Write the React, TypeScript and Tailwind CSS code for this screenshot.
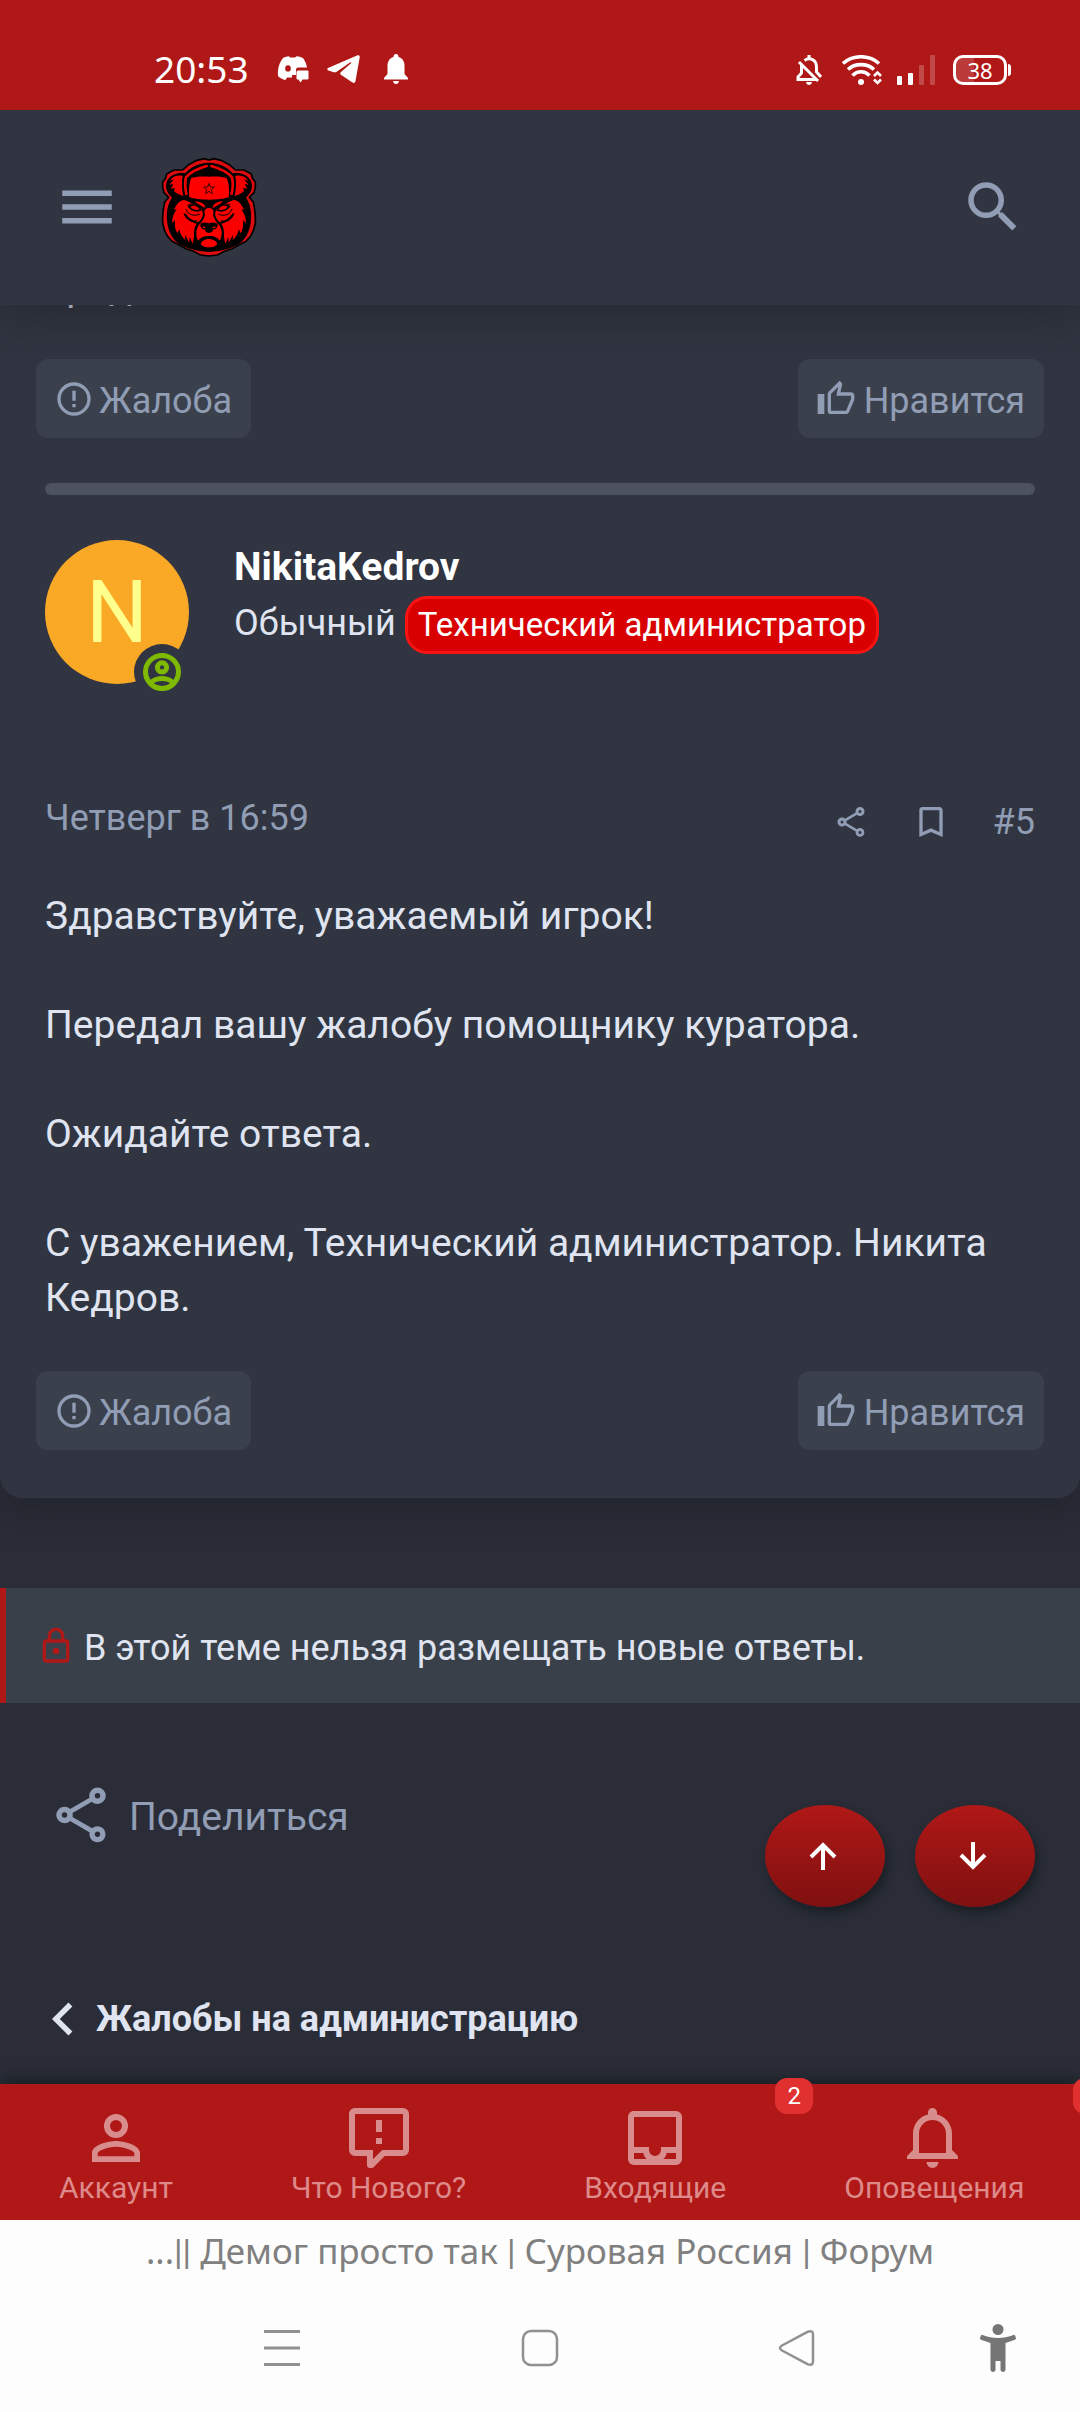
import React from "react";

const PATHS = {
  menu: "M3,6H21V8H3V6M3,11H21V13H3V11M3,16H21V18H3V16Z",
  search:
    "M9.5,3A6.5,6.5 0 0,1 16,9.5C16,11.11 15.41,12.59 14.44,13.73L14.71,14H15.5L20.5,19L19,20.5L14,15.5V14.71L13.73,14.44C12.59,15.41 11.11,16 9.5,16A6.5,6.5 0 0,1 3,9.5A6.5,6.5 0 0,1 9.5,3M9.5,5C7,5 5,7 5,9.5C5,12 7,14 9.5,14C12,14 14,12 14,9.5C14,7 12,5 9.5,5Z",
  share:
    "M18,16.08C17.24,16.08 16.56,16.38 16.04,16.85L8.91,12.7C8.96,12.47 9,12.24 9,12C9,11.76 8.96,11.53 8.91,11.3L15.96,7.19C16.5,7.69 17.21,8 18,8A3,3 0 0,0 21,5A3,3 0 0,0 18,2A3,3 0 0,0 15,5C15,5.24 15.04,5.47 15.09,5.7L8.04,9.81C7.5,9.31 6.79,9 6,9A3,3 0 0,0 3,12A3,3 0 0,0 6,15C6.79,15 7.5,14.69 8.04,14.19L15.16,18.34C15.11,18.55 15.08,18.77 15.08,19C15.08,20.61 16.39,21.91 18,21.91C19.61,21.91 20.92,20.61 20.92,19C20.92,17.39 19.61,16.08 18,16.08M18,4A1,1 0 0,1 19,5A1,1 0 0,1 18,6A1,1 0 0,1 17,5A1,1 0 0,1 18,4M6,13A1,1 0 0,1 5,12A1,1 0 0,1 6,11A1,1 0 0,1 7,12A1,1 0 0,1 6,13M18,20C17.45,20 17,19.55 17,19C17,18.45 17.45,18 18,18C18.55,18 19,18.45 19,19C19,19.55 18.55,20 18,20Z",
  alert:
    "M11,15H13V17H11V15M11,7H13V13H11V7M12,2C6.47,2 2,6.5 2,12A10,10 0 0,0 12,22A10,10 0 0,0 22,12A10,10 0 0,0 12,2M12,20A8,8 0 0,1 4,12A8,8 0 0,1 12,4A8,8 0 0,1 20,12A8,8 0 0,1 12,20Z",
  like: "M5,9V21H1V9H5M9,21A2,2 0 0,1 7,19V9C7,8.45 7.22,7.95 7.59,7.59L14.17,1L15.23,2.06C15.5,2.33 15.67,2.7 15.67,3.11L15.64,3.43L14.69,8H21C22.11,8 23,8.9 23,10V12C23,12.26 22.95,12.5 22.86,12.73L19.84,19.78C19.54,20.5 18.83,21 18,21H9M9,19H18.03L21,12V10H12.21L13.34,4.68L9,9.03V19Z",
  bookmark:
    "M17,18L12,15.82L7,18V5H17M17,3H7A2,2 0 0,0 5,5V21L12,18L19,21V5C19,3.89 18.1,3 17,3Z",
  chevron: "M15.41,16.58L10.83,12L15.41,7.41L14,6L8,12L14,18L15.41,16.58Z",
  lock: "M12,17C10.89,17 10,16.1 10,15C10,13.89 10.89,13 12,13A2,2 0 0,1 14,15A2,2 0 0,1 12,17M18,20V10H6V20H18M18,8A2,2 0 0,1 20,10V20A2,2 0 0,1 18,22H6C4.89,22 4,21.1 4,20V10C4,8.89 4.89,8 6,8H7V6A5,5 0 0,1 12,1A5,5 0 0,1 17,6V8H18M12,3A3,3 0 0,0 9,6V8H15V6A3,3 0 0,0 12,3Z",
  account:
    "M12,4A4,4 0 0,1 16,8A4,4 0 0,1 12,12A4,4 0 0,1 8,8A4,4 0 0,1 12,4M12,6A2,2 0 0,0 10,8A2,2 0 0,0 12,10A2,2 0 0,0 14,8A2,2 0 0,0 12,6M12,13C14.67,13 20,14.33 20,17V20H4V17C4,14.33 9.33,13 12,13M12,14.9C9.03,14.9 5.9,16.36 5.9,17V18.1H18.1V17C18.1,16.36 14.97,14.9 12,14.9Z",
  message:
    "M13,10H11V6H13V10M13,14H11V12H13V14M22,4V16A2,2 0 0,1 20,18H13.9L10.2,21.71C10,21.9 9.75,22 9.5,22H9A1,1 0 0,1 8,21V18H4A2,2 0 0,1 2,16V4C2,2.89 2.9,2 4,2H20A2,2 0 0,1 22,4M20,4H4V16H10V19.08L13.08,16H20V4Z",
  inbox:
    "M19,3H5C3.89,3 3,3.9 3,5V19A2,2 0 0,0 5,21H19A2,2 0 0,0 21,19V5A2,2 0 0,0 19,3M5,19V17H8.13C8.21,17.77 8.61,18.47 9.21,19H5M19,19H14.79C15.39,18.47 15.79,17.77 15.87,17H19V19M19,15H14V16A2,2 0 0,1 10,16V15H5V5H19V15Z",
  bell: "M16,17H7V10.5C7,8 9,6 11.5,6C14,6 16,8 16,10.5M18,16V10.5C18,7.43 15.86,4.86 13,4.18V3.5A1.5,1.5 0 0,0 11.5,2A1.5,1.5 0 0,0 10,3.5V4.18C7.13,4.86 5,7.43 5,10.5V16L3,18V19H20V18M11.5,22A2,2 0 0,0 13.5,20H9.5A2,2 0 0,0 11.5,22Z",
  accountCircle:
    "M12,2A10,10 0 0,0 2,12A10,10 0 0,0 12,22A10,10 0 0,0 22,12A10,10 0 0,0 12,2M7.07,18.28C7.5,17.38 10.12,16.5 12,16.5C13.88,16.5 16.5,17.38 16.93,18.28C15.57,19.36 13.86,20 12,20C10.14,20 8.43,19.36 7.07,18.28M18.36,16.83C16.93,15.09 13.46,14.5 12,14.5C10.54,14.5 7.07,15.09 5.64,16.83C4.62,15.5 4,13.82 4,12C4,7.59 7.59,4 12,4C16.41,4 20,7.59 20,12C20,13.82 19.38,15.5 18.36,16.83M12,6C10.06,6 8.5,7.56 8.5,9.5C8.5,11.44 10.06,13 12,13C13.94,13 15.5,11.44 15.5,9.5C15.5,7.56 13.94,6 12,6M12,11A1.5,1.5 0 0,1 10.5,9.5A1.5,1.5 0 0,1 12,8A1.5,1.5 0 0,1 13.5,9.5A1.5,1.5 0 0,1 12,11Z",
};

type IconName = keyof typeof PATHS;

function Icon({ name, className }: { name: IconName; className: string }) {
  return (
    <svg viewBox="0 0 24 24" fill="currentColor" aria-hidden="true" className={`shrink-0 ${className}`}>
      <path d={PATHS[name]} />
    </svg>
  );
}

function BearHalf() {
  return (
    <g>
      {/* black mass under the coat */}
      <path
        fill="#000"
        d="M171 44C140 44 112 60 100 76C84 72 52 78 44 102C38 122 48 138 60 148C46 172 44 190 45 212C46 240 56 268 78 286C104 304 140 310 171 312Z"
      />
      {/* ear */}
      <path
        fill="#f00000"
        d="M92 84C78 80 62 84 54 98L66 94L52 110L64 108L56 122L68 120L66 130C74 138 86 142 94 144C90 126 88 104 92 84Z"
      />
      {/* hat trim */}
      <path
        fill="none"
        stroke="#f00000"
        strokeWidth="8"
        strokeLinecap="round"
        d="M164 54C136 62 112 76 102 88C98 104 100 124 103 138"
      />
      {/* hat front */}
      <path fill="#ff0000" d="M171 86C150 84 128 86 118 90C110 108 110 130 112 148C132 154 154 155 171 155Z" />
      {/* face and cheek fur */}
      <path
        fill="#fb0000"
        d="M88 158C78 162 72 172 66 186L74 184C64 198 60 210 60 226L69 216C67 234 70 246 76 256L82 244C84 258 90 268 100 276L99 260L112 284L113 266L122 288C126 270 126 256 132 240C138 228 150 216 154 200C156 190 150 184 142 180C130 170 116 164 104 158C98 155 92 156 88 158Z"
      />
      {/* brow */}
      <path fill="#000" d="M104 172C118 166 140 170 158 186L171 180V168C148 166 128 152 100 156C112 160 124 162 134 168C124 164 112 166 104 172Z" />
      <path fill="#ff0000" d="M128 160C140 160 152 164 158 172L160 180C150 176 140 170 128 160Z" />
      {/* eye */}
      <path fill="#000" d="M106 174C120 164 142 174 150 187C136 196 116 190 106 174Z" />
      <path fill="#f00000" d="M115 176C126 170 138 176 143 184C134 188 122 185 115 176Z" />
      {/* folds under the eye */}
      <path
        fill="none"
        stroke="#000"
        strokeWidth="3"
        strokeLinecap="round"
        d="M102 184C108 200 124 206 142 199M96 196C102 216 118 224 134 218"
      />
      <path
        fill="none"
        stroke="#000"
        strokeWidth="6"
        strokeLinecap="round"
        d="M153 186C160 204 152 216 140 226C124 222 110 216 100 200M138 226C128 240 126 262 134 284"
      />
      {/* muzzle */}
      <path
        fill="#ff0000"
        d="M171 180C162 180 154 186 159 200C156 214 148 224 140 232C130 248 132 264 138 278C148 268 158 264 171 264Z"
      />
      {/* nose */}
      <path fill="#000" d="M171 226C160 222 148 222 145 230C145 240 154 246 160 244C158 250 162 254 171 255Z" />
      <path fill="#ff0000" d="M150 236C154 234 160 236 161 240C156 241 152 239 150 236Z" />
      {/* mouth and chin */}
      <path fill="#000" d="M171 264C154 264 142 272 134 284L146 302L171 306Z" />
      <path fill="#ff0000" d="M171 273C158 273 148 280 146 288C152 296 162 298 171 298Z" />
    </g>
  );
}

function BearLogo() {
  return (
    <svg viewBox="0 0 342 354" className="h-[118px] w-[114px]" role="img" aria-label="Суровая Россия">
      <path
        fill="#dc0c10"
        stroke="#000"
        strokeWidth="5"
        strokeLinejoin="round"
        d="M171 36L156 32L132 38L110 50L92 66L66 66L44 78L40 92L32 102L32 118L36 134L50 148L38 162L34 184L32 206L32 226L38 248L46 264L60 280L80 290L102 302L124 310L146 321L171 324L196 321L218 310L240 302L262 290L282 280L296 264L304 248L310 226L310 206L308 184L304 162L292 148L306 134L310 118L310 102L302 92L298 78L276 66L250 66L232 50L210 38L186 32Z"
      />
      <BearHalf />
      <g transform="translate(342 0) scale(-1 1)">
        <BearHalf />
      </g>
      <path
        fill="none"
        stroke="#300"
        strokeWidth="3"
        d="M171 106L175 117L187 117L178 125L181 137L171 130L161 137L164 125L155 117L167 117Z"
      />
    </svg>
  );
}

function StatusBar() {
  return (
    <div className="relative z-20 flex h-[110px] items-end justify-between bg-[#b01817] pr-[68px] pl-[154px] pb-[25px] text-white">
      <div className="flex items-center">
        <span className="font-['Noto_Sans'] text-[37px] leading-8">20:53</span>
        <svg viewBox="0 0 32 28" className="ml-7 h-7 w-8" fill="currentColor" aria-hidden="true">
          <path
            fillRule="evenodd"
            d="M6 3C8 1.800 10 1.400 12 1.200L13 2.600H18L19.500 1.200C22 1.400 24 2 26 3C28 6 29.500 9 30 12.500H21C20 12.500 19 13.500 19 14.500V20H15V22.500H10L8.500 25C5.500 24.500 3 23 1 21C.500 14 2 8 6 3ZM11 10.200A2.800 3.200 0 1 0 11 16.600A2.800 3.200 0 1 0 11 10.200Z"
          />
          <path d="M21 15.500H30.500Q31.500 15.500 31.500 16.500V23.500Q31.500 24.500 30.500 24.500H25.500L23.500 27.500L21.500 24.500H20.500Q19.500 24.500 19.500 23.500V17Q19.500 15.500 21 15.500Z" />
        </svg>
        <svg viewBox="0 0 34 28" className="ml-[18px] h-7 w-[34px]" fill="currentColor" aria-hidden="true">
          <path d="M1 13L30 .500C32 0 33 .800 32.700 2.500L28.500 26C28 28 27 28.500 25.500 27.500L16.500 21.500L13.500 19.500C13 18.500 13.300 17.800 14 17L24 8.200C24.500 7.500 24 7 23 7.500L10 16.500C8.500 17.500 7.500 17.500 6 17L1.500 15.500C0 14.800 0 13.800 1 13Z" />
        </svg>
        <svg viewBox="0 0 24 30" className="ml-[23px] h-[30px] w-6" fill="currentColor" aria-hidden="true">
          <path d="M12 0Q14.500 0 14.500 3C18.500 4 20.500 7.500 20.500 12V20L24 24V25.500H0V24L3.500 20V12C3.500 7.500 5.500 4 9.500 3Q9.500 0 12 0ZM9 27H15Q14.500 30 12 30Q9.500 30 9 27Z" />
        </svg>
      </div>
      <div className="flex items-center">
        <svg viewBox="0 0 26 30" className="h-[30px] w-[26px]" fill="none" stroke="currentColor" strokeWidth="3" aria-hidden="true">
          <path d="M5.500 10V18L2 22V24.500H20M8.500 5.500C14 1.500 20.500 5 20.500 12V17L25 22" />
          <path d="M3 7L22 26" />
          <path d="M13 0V4" />
          <path d="M10 27H16Q15.500 30 13 30Q10.500 30 10 27Z" fill="currentColor" stroke="none" />
        </svg>
        <svg viewBox="0 0 40 30" className="ml-5 h-[30px] w-10" fill="none" stroke="currentColor" strokeWidth="3.600" aria-hidden="true">
          <path d="M1 8.500C11 -.500 27 -.500 37 8.500M6 14.500C13 8 25 8 32 14.500M10.500 20.500C15.500 15.500 22.500 15.500 27.500 20.500" />
          <circle cx="19" cy="27" r="3" fill="currentColor" stroke="none" />
          <path d="M32 21L35.500 17.500L39 21M32 24.500L35.500 28L39 24.500" strokeWidth="2.600" />
        </svg>
        <svg viewBox="0 0 38 30" className="ml-[15px] h-[30px] w-[38px]" fill="currentColor" aria-hidden="true">
          <rect x="0" y="21" width="5" height="9" rx="1" />
          <rect x="11" y="18" width="5" height="12" rx="1" />
          <rect x="22" y="10" width="5" height="20" rx="1" opacity=".22" />
          <rect x="33" y="0" width="5" height="30" rx="1" opacity=".22" />
        </svg>
        <div className="ml-[18px] flex items-center">
          <div className="flex h-[30px] w-[54px] items-center justify-center rounded-[10px] border-3 border-white bg-linear-to-r from-white/15 from-38% to-transparent to-38% font-['Noto_Sans'] text-[22px] leading-6">
            38
          </div>
          <div className="mr-px ml-px h-3 w-[3px] rounded-r-sm bg-white" />
        </div>
      </div>
    </div>
  );
}

function PostActions() {
  const button =
    "flex h-[79px] items-center rounded-xl bg-[#3b414c] pt-1 pr-[19px] pl-[18px] text-[36px] leading-[42px] text-[#919db4]";
  return (
    <div className="flex justify-between px-9">
      <button type="button" className={`${button} gap-[5px]`}>
        <Icon name="alert" className="-mt-1 size-10" />
        Жалоба
      </button>
      <button type="button" className={`${button} gap-2`}>
        <Icon name="like" className="-mt-1 size-10" />
        Нравится
      </button>
    </div>
  );
}

const TABS: { icon: IconName; label: string; unread?: string }[] = [
  { icon: "account", label: "Аккаунт" },
  { icon: "message", label: "Что Нового?" },
  { icon: "inbox", label: "Входящие", unread: "2" },
  { icon: "bell", label: "Оповещения", unread: "" },
];

export default function App() {
  return (
    <div className="flex min-h-screen flex-col bg-[#2a2d37] font-[Roboto,sans-serif] text-[#dfe4f0]">
      <StatusBar />
      <header className="relative z-10 flex h-[195px] items-center bg-[#303541] pr-[54px] pb-[2px] pl-[54px] text-[#919db4] shadow-[0_10px_40px_0_rgba(30,30,35,0.5)]">
        <button type="button" aria-label="Меню">
          <Icon name="menu" className="size-[66px]" />
        </button>
        <a href="#home" className="ml-8">
          <BearLogo />
        </a>
        <button type="button" aria-label="Поиск" className="ml-auto">
          <Icon name="search" className="size-[66px]" />
        </button>
      </header>

      <main className="flex-1">
        <div className="overflow-hidden rounded-b-[22px] bg-[#303541] shadow-[0_10px_40px_0_rgba(20,20,28,0.4)]">
          <article className="pb-[45px]">
            <p className="-mt-[45px] px-[45px] text-[39px] leading-[55px]">Тред</p>
            <div className="pt-11">
              <PostActions />
            </div>
          </article>
          <hr className="mx-[45px] h-3 rounded-md border-0 bg-[#4c525e]" />
          <article className="pt-[45px] pb-12">
            <div className="flex items-start gap-[45px] px-[45px]">
              <div className="relative">
                <div className="flex size-[144px] items-center justify-center rounded-full bg-[#faa927] text-[87px] leading-none text-[#ffff8d]">
                  N
                </div>
                <span className="absolute -right-px -bottom-4 flex size-14 items-center justify-center rounded-full bg-[#303541] text-[#7fb900]">
                  <svg viewBox="0 0 24 24" className="size-[44px]" fill="currentColor" stroke="currentColor" strokeWidth=".7" role="img" aria-label="В сети">
                    <path d={PATHS.accountCircle} />
                  </svg>
                </span>
              </div>
              <div>
                <h4 className="text-[39px] leading-[54px] font-bold text-white">
                  <a href="#user">NikitaKedrov</a>
                </h4>
                <div className="flex items-start gap-[9px] text-[36px] leading-[58px]">
                  <span>Обычный</span>
                  <em className="mt-0.5 rounded-[22px] border-3 border-[#fa1313] bg-[#d80000] px-[10px] text-[33px] leading-[52px] text-white not-italic">
                    Технический администратор
                  </em>
                </div>
              </div>
            </div>
            <div className="mt-[114px] flex h-12 items-center justify-between px-[45px] text-[36px] leading-[42px] text-[#919db4]">
              <time className="-mt-2">Четверг в 16:59</time>
              <div className="flex items-center">
                <a href="#share" aria-label="Поделиться сообщением">
                  <Icon name="share" className="size-9" />
                </a>
                <a href="#bookmark" aria-label="Закладка" className="ml-[42px]">
                  <Icon name="bookmark" className="size-10" />
                </a>
                <a href="#post-5" className="ml-[42px]">
                  #5
                </a>
              </div>
            </div>
            <div className="mt-[43px] mb-[45px] space-y-[54px] px-[45px] text-[39px] leading-[55px]">
              <p>Здравствуйте, уважаемый игрок!</p>
              <p>Передал вашу жалобу помощнику куратора.</p>
              <p>Ожидайте ответа.</p>
              <p>С уважением, Технический администратор. Никита Кедров.</p>
            </div>
            <PostActions />
          </article>
        </div>

        <div className="mt-[90px] flex h-[115px] items-center border-l-6 border-[#b01817] bg-[#3a4049] pt-1 pl-[30px] text-[36px] leading-[50px]">
          <Icon name="lock" className="mr-2 -mt-1 size-10 text-[#b01817]" />
          В этой теме нельзя размещать новые ответы.
        </div>

        <div className="mt-[79px] flex justify-between pr-[45px] pl-12">
          <a href="#share" className="flex h-[66px] items-center gap-[15px] text-[39px] leading-[55px] text-[#919db4]">
            <Icon name="share" className="size-[66px]" />
            <span className="pt-1">Поделиться</span>
          </a>
          <div className="mt-[23px] flex gap-[30px] text-white">
            {[
              { label: "Наверх", d: "M14 28V2M2 15L14 3L26 15" },
              { label: "Вниз", d: "M14 0V26M2 13L14 25L26 13" },
            ].map((b) => (
              <button
                key={b.label}
                type="button"
                aria-label={b.label}
                className="flex h-[102px] w-[120px] items-center justify-center rounded-[50%] bg-linear-to-b from-[#b01817] to-[#801010] shadow-[3px_6px_10px_rgba(15,20,25,0.6)]"
              >
                <svg viewBox="0 0 28 28" className="mr-1 size-7" fill="none" stroke="currentColor" strokeWidth="4" aria-hidden="true">
                  <path d={b.d} />
                </svg>
              </button>
            ))}
          </div>
        </div>

        <a href="#forum" className="mt-[79px] flex h-[66px] items-center pl-[30px] text-[36px] leading-[50px] font-bold">
          <Icon name="chevron" className="size-[66px]" />
          Жалобы на администрацию
        </a>
      </main>

      <nav className="mt-7 flex h-[136px] overflow-x-clip bg-[#b01817] shadow-[0_-2px_16px_rgba(15,20,25,0.8)]">
        {TABS.map((t) => (
          <a
            key={t.label}
            href="#tab"
            className="relative flex shrink-0 flex-col items-center px-[59px] pt-[18px] text-[30px] leading-[30px] text-[#de8a8a]"
          >
            <Icon name={t.icon} className="-mb-px size-[72px] text-[#d98c8c]" />
            {t.label}
            {t.unread !== undefined && (
              <span className="absolute -top-[6px] left-full -ml-[10px] flex h-9 w-[38px] items-center justify-center rounded-xl bg-[#e03030] text-[24px] leading-9 text-white">
                {t.unread}
              </span>
            )}
          </a>
        ))}
      </nav>

      <footer className="flex h-48 flex-col items-center bg-[#fdfdfd] font-['Noto_Sans'] text-[#808080]">
        <div className="mt-1 text-[35px] leading-[54px] whitespace-nowrap">
          ...<span className="font-[Roboto]">||</span> Демог просто так <span className="font-[Roboto]">|</span> Суровая
          Россия <span className="font-[Roboto]">|</span> Форум
        </div>
        <div className="mt-11 flex w-full items-center justify-between pr-[58px] pl-[258px]">
          <button type="button" aria-label="Недавние">
            <svg viewBox="0 0 48 48" className="size-12" stroke="#909090" strokeWidth="3" aria-hidden="true">
              <path d="M6 7.500H42M6 24H42M6 40.500H42" />
            </svg>
          </button>
          <button type="button" aria-label="Домой">
            <svg viewBox="0 0 48 48" className="size-12" fill="none" stroke="#909090" strokeWidth="2.500" aria-hidden="true">
              <rect x="7" y="7" width="34" height="34" rx="8" />
            </svg>
          </button>
          <div className="flex items-center gap-[153px]">
            <button type="button" aria-label="Назад">
              <svg viewBox="0 0 48 48" className="size-12" fill="none" stroke="#909090" strokeWidth="2.500" strokeLinejoin="round" aria-hidden="true">
                <path d="M9 21.500L35 7.600Q40 6 40 10.500V37.500Q40 42 35 40.400L9 26.500Q5 24 9 21.500Z" />
              </svg>
            </button>
            <button type="button" aria-label="Специальные возможности">
              <svg viewBox="0 0 48 48" className="size-12" fill="#757575" aria-hidden="true">
                <circle cx="24" cy="5.500" r="5.500" />
                <path d="M7 11.500Q7.500 10.500 8.500 11C18 15 30 15 39.500 11Q40.500 10.500 41 11.500L42 14Q42.200 15.200 41 15.700L31.500 19V46Q31 48 29 48Q27 48 26.500 46V37H21.500V46Q21 48 19 48Q17 48 16.500 46V19L7 15.700Q5.800 15.200 6 14Z" />
              </svg>
            </button>
          </div>
        </div>
      </footer>
    </div>
  );
}
